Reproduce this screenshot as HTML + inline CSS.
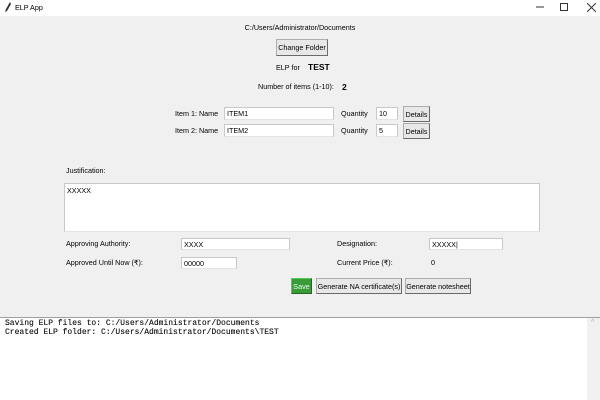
<!DOCTYPE html>
<html><head><style>
*{margin:0;padding:0;box-sizing:border-box}
body{width:600px;height:400px;background:#f0f0f0;position:relative;overflow:hidden;font-family:"Liberation Sans",sans-serif;font-size:7.2px;color:#000}
.a{position:absolute;white-space:nowrap;line-height:10px}
.e{position:absolute;background:#fff;border:1px solid #c8c8c8;border-bottom-color:#e4e4e4;padding-left:2px;line-height:11px;font-size:7.2px;white-space:nowrap}
.b{position:absolute;background:#e8e8e8;border:1px solid #adadad;border-right-color:#6a6a6a;border-bottom-color:#6a6a6a;text-align:center;font-size:7.2px;display:flex;align-items:center;justify-content:center;white-space:nowrap}
</style></head><body>
<div style="position:absolute;left:0;top:0;width:600px;height:16px;background:#fff"></div>
<svg style="position:absolute;left:4px;top:2px" width="8" height="11"><path d="M6 0 L7 2 L3 9 L1 10 L2 7 Z" fill="#333"/></svg>
<div class="a" style="left:15px;top:3px">ELP App</div>
<svg style="position:absolute;left:536px;top:6px" width="8" height="2"><path d="M0 1H8" stroke="#333"/></svg>
<div style="position:absolute;left:560px;top:3px;width:8px;height:8px;border:1px solid #333"></div>
<svg style="position:absolute;left:587px;top:3px" width="9" height="9"><path d="M0 0L9 9M9 0L0 9" stroke="#333"/></svg>
<div class="a" style="left:0;width:600px;text-align:center;top:23px">C:/Users/Administrator/Documents</div>
<div class="b" style="left:276px;top:39px;width:52px;height:17px">Change Folder</div>
<div class="a" style="left:276px;top:63px">ELP for</div>
<div class="a" style="left:308px;top:62px;font-weight:bold;font-size:8.5px">TEST</div>
<div class="a" style="left:258px;top:82px">Number of items (1-10):</div>
<div class="a" style="left:342px;top:82px;font-weight:bold;font-size:8.5px">2</div>
<div class="a" style="left:175px;top:109px">Item 1: Name</div>
<div class="e" style="left:224px;top:107px;width:110px;height:13px">ITEM1</div>
<div class="a" style="left:341px;top:109px">Quantity</div>
<div class="e" style="left:376px;top:107px;width:22px;height:13px">10</div>
<div class="b" style="left:403px;top:106px;width:27px;height:16px">Details</div>
<div class="a" style="left:175px;top:126px">Item 2: Name</div>
<div class="e" style="left:224px;top:124px;width:110px;height:13px">ITEM2</div>
<div class="a" style="left:341px;top:126px">Quantity</div>
<div class="e" style="left:376px;top:124px;width:22px;height:13px">5</div>
<div class="b" style="left:403px;top:123px;width:27px;height:16px">Details</div>
<div class="a" style="left:66px;top:166px">Justification:</div>
<div class="e" style="left:64px;top:183px;width:476px;height:49px;padding-top:1px">XXXXX</div>
<div class="a" style="left:66px;top:239px">Approving Authority:</div>
<div class="e" style="left:181px;top:238px;width:109px;height:12px">XXXX</div>
<div class="a" style="left:337px;top:239px">Designation:</div>
<div class="e" style="left:429px;top:238px;width:74px;height:12px">XXXXX|</div>
<div class="a" style="left:66px;top:258px">Approved Until Now (₹):</div>
<div class="e" style="left:181px;top:257px;width:56px;height:12px">00000</div>
<div class="a" style="left:337px;top:258px">Current Price (₹):</div>
<div class="a" style="left:431px;top:258px">0</div>
<div class="b" style="left:291px;top:278px;width:21px;height:16px;background:#3a9b3a;color:#e8ffe8;border-color:#5c5 #262 #262 #5c5">Save</div>
<div class="b" style="left:316px;top:278px;width:86px;height:16px">Generate NA certificate(s)</div>
<div class="b" style="left:405px;top:278px;width:66px;height:16px">Generate notesheet</div>
<div style="position:absolute;left:0;top:317px;width:600px;height:83px;background:#fff;border-top:1px solid #a0a0a0"></div>
<div style="position:absolute;left:587px;top:318px;width:13px;height:82px;background:#f0f0f0"></div>
<div class="a" style="left:591px;top:318px;color:#aaa;font-size:7px">^</div>
<div class="a" style="left:5px;top:319px;font-family:'Liberation Mono',monospace;font-size:8px;line-height:9px;color:#222;text-shadow:0 0 0.3px #000">Saving ELP files to: C:/Users/Administrator/Documents<br>Created ELP folder: C:/Users/Administrator/Documents\TEST</div>
</body></html>
